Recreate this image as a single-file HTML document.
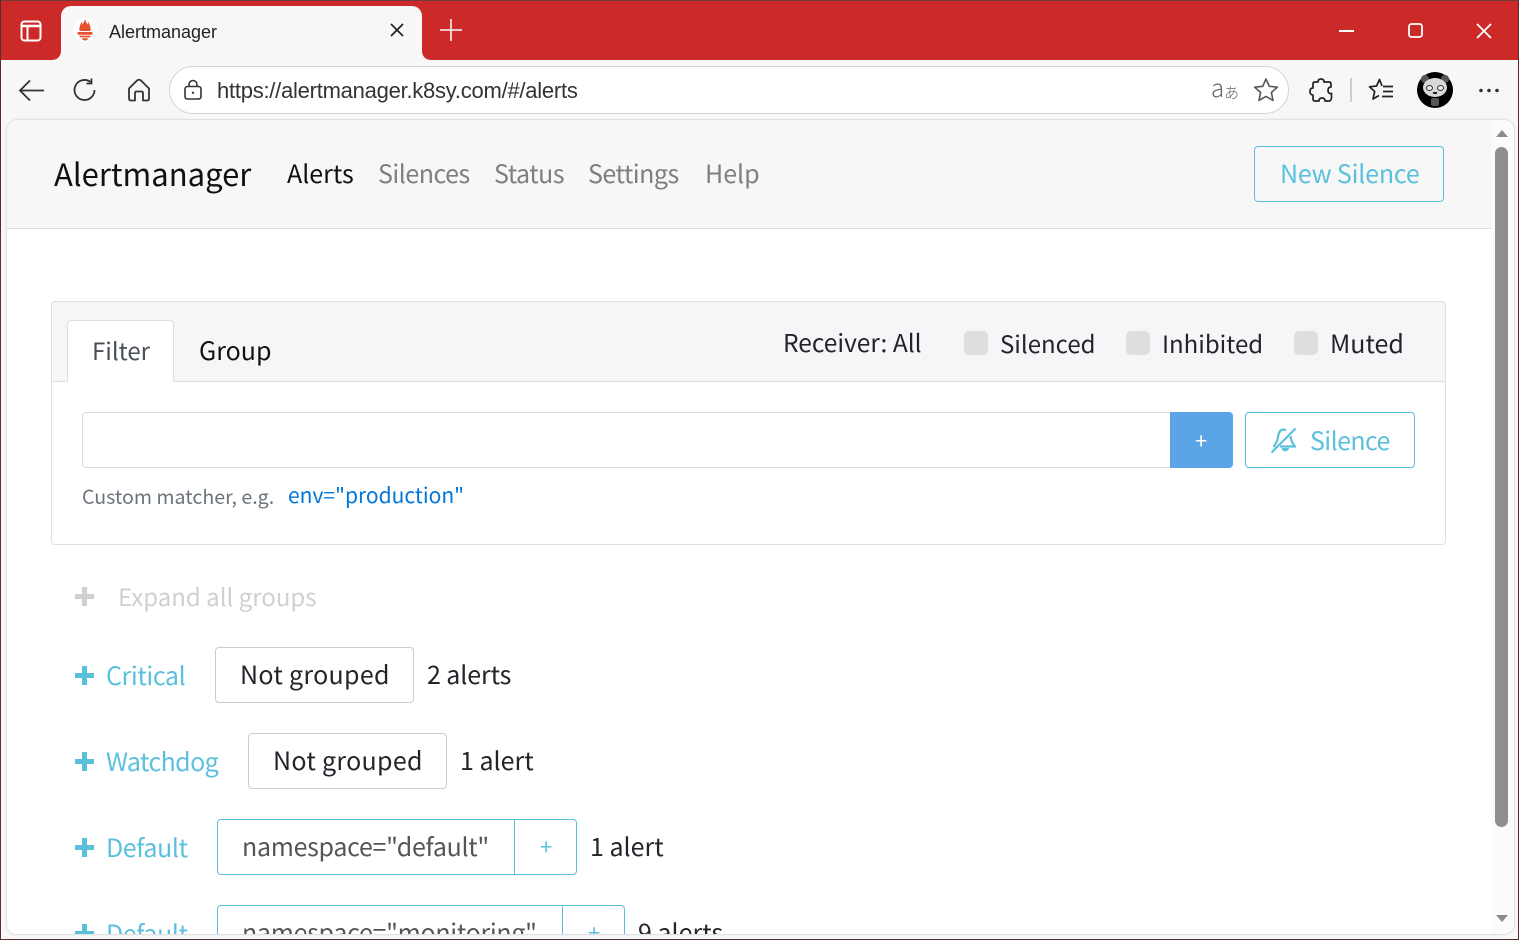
<!DOCTYPE html>
<html lang="en"><head><meta charset="utf-8"><title>Alertmanager</title>
<style>
html,body{margin:0;padding:0;width:1519px;height:940px;overflow:hidden;background:#f7f7f7}
body{position:relative;font-family:"Noto Sans CJK SC","Liberation Sans",sans-serif}
div,span,svg{position:absolute;box-sizing:border-box}
.t{white-space:nowrap;line-height:30px;height:30px;font-size:24px;color:#212529}
.n{color:#7f7f7f;font-size:25px;top:158px;letter-spacing:-.5px}
.c{color:#5bc0de;font-size:25px}
.b{border:1px solid #ccc;border-radius:4px;background:#fff}
.cb{width:24px;height:24px;top:331px;background:#dedede;border-radius:5px}
</style></head><body>
<!-- title bar -->
<div style="left:0;top:0;width:1519px;height:60px;background:#cb2a29;border-top:1px solid #6e3a3a"></div>
<svg style="left:19px;top:19px" width="24" height="24" viewBox="0 0 24 24" fill="none" stroke="#fff" stroke-width="2"><rect x="2.500" y="2.500" width="19" height="19" rx="3"/><path d="M3 7H21" stroke-width="2.500"/><path d="M8.500 7V21"/></svg>
<div style="left:61px;top:6px;width:361px;height:54px;background:#f7f7f7;border-radius:10px 10px 0 0"></div>
<svg style="left:51px;top:50px" width="10" height="10"><path d="M0 10Q10 10 10 0V10Z" fill="#f7f7f7"/></svg>
<svg style="left:422px;top:50px" width="10" height="10"><path d="M10 10Q0 10 0 0V10Z" fill="#f7f7f7"/></svg>
<div style="left:73px;top:18px;width:24px;height:24px;border-radius:50%;background:#fff"></div>
<svg style="left:77px;top:19px" width="16" height="22" viewBox="0 0 16 22" fill="#e6522c"><path d="M8 0C8.500 2.500 9.800 4 10.500 5.500C11 4.500 11 3.500 11 2.500C12.500 5 14 8 13.500 12H2.500C2 8 3.500 5 5 2.500C5 3.500 5 4.500 5.500 5.500C6.200 4 7.500 2.500 8 0Z"/><rect x=".5" y="13" width="15" height="2.800" rx=".8"/><rect x="2.500" y="16.600" width="11" height="1.800" rx=".8"/><path d="M5 19.200H11C11 20.500 9.500 21.500 8 21.500S5 20.500 5 19.200Z"/></svg>
<span class="t" style="left:109px;top:17px;font:18px/30px 'Liberation Sans',sans-serif;color:#222">Alertmanager</span>
<svg style="left:389px;top:22px" width="16" height="16" fill="none" stroke="#222" stroke-width="1.700"><path d="M2 2L14 14M14 2L2 14"/></svg>
<svg style="left:439px;top:18px" width="24" height="24" fill="none" stroke="#f4dcdc" stroke-width="1.800"><path d="M12 1V23M1 12H23"/></svg>
<svg style="left:1339px;top:30px" width="16" height="2"><rect width="15" height="2" fill="#fff"/></svg>
<svg style="left:1407px;top:22px" width="17" height="17" fill="none" stroke="#fff" stroke-width="1.800"><rect x="2" y="2" width="13" height="13" rx="2.500"/></svg>
<svg style="left:1475px;top:22px" width="18" height="18" fill="none" stroke="#fff" stroke-width="1.800"><path d="M2 2L16 16M16 2L2 16"/></svg>
<!-- toolbar -->
<svg style="left:17px;top:77px" width="28" height="28" fill="none" stroke="#333" stroke-width="1.800"><path d="M27 13.500H3M13 3.500L3 13.500L13 23.500"/></svg>
<svg style="left:72px;top:77px" width="26" height="26" viewBox="0 0 26 26" fill="none" stroke="#333" stroke-width="1.800"><path d="M22.500 13A10 10 0 1 1 18.500 5M19.500 1.500V6.500H14.500"/></svg>
<svg style="left:126px;top:77px" width="26" height="26" viewBox="0 0 26 26" fill="none" stroke="#333" stroke-width="1.800" stroke-linejoin="round"><path d="M3 11.500L11 3.500Q13 2 15 3.500L23 11.500V21.500Q23 23.500 21 23.500H17V16Q17 14.500 15.500 14.500H10.500Q9 14.500 9 16V23.500H5Q3 23.500 3 21.500Z"/></svg>
<div style="left:169px;top:66px;width:1120px;height:48px;border-radius:24px;background:#fff;border:1.500px solid #d4d4d4"></div>
<svg style="left:183px;top:79px" width="20" height="22" fill="none" stroke="#333" stroke-width="1.600"><rect x="2" y="7.500" width="16" height="12.500" rx="2.500"/><path d="M6 7.500V5.500A4 4 0 0 1 14 5.500V7.500"/><circle cx="10" cy="13.800" r="1.200" fill="#333" stroke="none"/></svg>
<span class="t" style="left:217px;top:76px;font:22px/30px 'Liberation Sans',sans-serif;color:#333;letter-spacing:-.25px">https://alertmanager.k8sy.com/#/alerts</span>
<span class="t" style="left:1211px;top:72px;font:300 24px/30px 'Noto Sans CJK JP',sans-serif;color:#666">a</span>
<span class="t" style="left:1224px;top:78px;font:300 15px/30px 'Noto Sans CJK JP',sans-serif;color:#666">あ</span>
<svg style="left:1253px;top:77px" width="26" height="26" viewBox="0 0 26 26" fill="none" stroke="#555" stroke-width="1.600" stroke-linejoin="round"><path d="M13 2L16.300 9.300L24.300 10.200L18.400 15.500L20 23.400L13 19.400L6 23.400L7.600 15.500L1.700 10.200L9.700 9.300Z"/></svg>
<svg style="left:1308px;top:77px" width="26" height="26" viewBox="0 0 26 26" fill="none" stroke="#222" stroke-width="1.700" stroke-linejoin="round"><path d="M10 5Q10 2 13 2Q16 2 16 5H21Q23 5 23 7V10Q20 10 20 13.500Q20 17 23.500 16.500V21Q23 24 21 24H17Q17 21 14 21Q11 21 11 24H7Q5 24 5 22V18Q2 18 2 14.500Q2 11 5 11V7Q5 5 7 5Z"/></svg>
<div style="left:1350px;top:78px;width:2px;height:24px;background:#cfcfcf"></div>
<svg style="left:1368px;top:77px" width="27" height="26" viewBox="0 0 27 26" fill="none" stroke="#222" stroke-width="1.700" stroke-linejoin="round"><path d="M14 9L11.500 2.500L8.500 9L1.500 9.800L6.700 14.500L5 22L11 18.500"/><path d="M15 9.500H25M15 14.500H25M14 19.500H25"/></svg>
<div style="left:1417px;top:72px;width:36px;height:36px;border-radius:50%;background:#000"></div>
<div style="left:1421px;top:75px;width:8px;height:8px;border-radius:50%;background:#555"></div>
<div style="left:1441px;top:75px;width:8px;height:8px;border-radius:50%;background:#555"></div>
<div style="left:1423px;top:78px;width:24px;height:19px;border-radius:50%;background:#d8d8d8"></div>
<div style="left:1426px;top:85px;width:7px;height:6px;border-radius:50%;border:1.500px solid #333;background:#eee"></div>
<div style="left:1437px;top:85px;width:7px;height:6px;border-radius:50%;border:1.500px solid #333;background:#eee"></div>
<div style="left:1433px;top:92px;width:4px;height:2px;background:#222"></div>
<div style="left:1431px;top:98px;width:8px;height:8px;background:#555;border-radius:2px"></div>
<svg style="left:1478px;top:88px" width="22" height="5" fill="#333"><circle cx="3" cy="2.500" r="1.800"/><circle cx="11" cy="2.500" r="1.800"/><circle cx="19" cy="2.500" r="1.800"/></svg>
<!-- viewport -->
<div style="left:7px;top:120px;width:1507px;height:814px;background:#fff;border-radius:10px;overflow:hidden;box-shadow:0 0 2px rgba(0,0,0,.25)">
<div style="left:0;top:0;width:1484px;height:109px;background:#f7f7f7;border-bottom:1px solid #dcdcdc"></div>
<div style="left:1484px;top:0;width:23px;height:814px;background:#fbfbfb"></div>
<svg style="left:1488px;top:9px" width="14" height="9"><path d="M1 8H13L7 1Z" fill="#8b8b8b"/></svg>
<div style="left:1488px;top:27px;width:13px;height:680px;border-radius:7px;background:#8f8f8f"></div>
<svg style="left:1488px;top:794px" width="14" height="9"><path d="M1 1H13L7 8Z" fill="#8b8b8b"/></svg>
</div>
<!-- navbar -->
<span class="t" style="left:54px;top:158px;font-size:31px;color:#111">Alertmanager</span>
<span class="t n" style="left:287px;color:#111;letter-spacing:0">Alerts</span>
<span class="t n" style="left:378px">Silences</span>
<span class="t n" style="left:494px">Status</span>
<span class="t n" style="left:588px">Settings</span>
<span class="t n" style="left:705px;letter-spacing:0">Help</span>
<div class="b" style="left:1254px;top:146px;width:190px;height:56px;border-color:#5bc0de;background:transparent"></div>
<span class="t c" style="left:1280px;top:158px;letter-spacing:-.2px">New Silence</span>
<!-- card -->
<div class="b" style="left:51px;top:301px;width:1395px;height:244px;border-color:#dfdfdf"></div>
<div style="left:52px;top:302px;width:1393px;height:80px;background:#f6f6f8;border-bottom:1px solid #dfdfdf;border-radius:4px 4px 0 0"></div>
<div style="left:67px;top:320px;width:107px;height:62px;background:#fff;border:1px solid #dfdfdf;border-bottom:0;border-radius:4px 4px 0 0"></div>
<span class="t" style="left:92px;top:335px;color:#495057">Filter</span>
<span class="t" style="left:199px;top:335px;color:#111;font-size:25px">Group</span>
<span class="t" style="left:783px;top:328px;font-size:24.500px">Receiver: All</span>
<div class="cb" style="left:964px"></div><span class="t" style="left:1000px;top:328px">Silenced</span>
<div class="cb" style="left:1126px"></div><span class="t" style="left:1162px;top:328px">Inhibited</span>
<div class="cb" style="left:1294px"></div><span class="t" style="left:1330px;top:328px;font-size:25px">Muted</span>
<div class="b" style="left:82px;top:412px;width:1090px;height:56px;border-color:#dcdcdc;border-radius:4px 0 0 4px"></div>
<div style="left:1170px;top:412px;width:63px;height:56px;background:#5ba5e6;border-radius:0 4px 4px 0"></div>
<span class="t" style="left:1195px;top:425px;color:#fff;font-size:22px">+</span>
<div class="b" style="left:1245px;top:412px;width:170px;height:56px;border-color:#5bc0de"></div>
<svg style="left:1270px;top:427px" width="28" height="27" viewBox="0 0 28 27" fill="none" stroke="#5bc0de" stroke-width="2.200" stroke-linejoin="round"><path d="M1.500 25.500L25.500 1.500"/><path d="M16 3.500Q12 1 9.500 5Q8 8 7.500 12Q7 15 3.500 20M20.500 9Q21 15 25 19.500H10"/><path d="M12.500 21A2.800 2.800 0 0 0 18 21" fill="#5bc0de"/></svg>
<span class="t c" style="left:1310px;top:425px;letter-spacing:-.6px">Silence</span>
<span class="t" style="left:82px;top:481px;font-size:19.600px;color:#6c757d">Custom matcher, e.g.</span>
<span class="t" style="left:288px;top:480px;font-size:21px;color:#0275d8">env="production"</span>
<!-- groups -->
<svg style="left:75px;top:587px" width="19" height="19" fill="#d0d0d0"><path d="M7 0H12V7H19V12H12V19H7V12H0V7H7Z"/></svg>
<span class="t" style="left:118px;top:581px;font-size:24px;color:#d0d0d0">Expand all groups</span>
<svg style="left:75px;top:666px" width="19" height="19" fill="#5bc0de"><path d="M7 0H12V7H19V12H12V19H7V12H0V7H7Z"/></svg>
<span class="t c" style="left:106px;top:660px;letter-spacing:-.4px">Critical</span>
<div class="b" style="left:215px;top:647px;width:199px;height:56px"></div>
<span class="t" style="left:240px;top:659px;font-size:25px;letter-spacing:.3px">Not grouped</span>
<span class="t" style="left:427px;top:659px;font-size:25px;letter-spacing:-.1px">2 alerts</span>
<svg style="left:75px;top:752px" width="19" height="19" fill="#5bc0de"><path d="M7 0H12V7H19V12H12V19H7V12H0V7H7Z"/></svg>
<span class="t c" style="left:106px;top:746px;letter-spacing:-.6px">Watchdog</span>
<div class="b" style="left:248px;top:733px;width:199px;height:56px"></div>
<span class="t" style="left:273px;top:745px;font-size:25px;letter-spacing:.3px">Not grouped</span>
<span class="t" style="left:460px;top:745px;font-size:25px">1 alert</span>
<svg style="left:75px;top:838px" width="19" height="19" fill="#5bc0de"><path d="M7 0H12V7H19V12H12V19H7V12H0V7H7Z"/></svg>
<span class="t c" style="left:106px;top:832px;letter-spacing:-.4px">Default</span>
<div class="b" style="left:217px;top:819px;width:360px;height:56px;border-color:#5bc0de"></div>
<div style="left:514px;top:819px;width:1px;height:56px;background:#5bc0de"></div>
<span class="t" style="left:242px;top:831px;font-size:25px;color:#555;letter-spacing:-.3px">namespace="default"</span>
<span class="t c" style="left:540px;top:831px;font-size:22px">+</span>
<span class="t" style="left:590px;top:831px;font-size:25px">1 alert</span>
<div style="left:7px;top:900px;width:1484px;height:34px;overflow:hidden;background:#fff;border-radius:0 0 0 10px">
<svg style="left:68px;top:24px" width="19" height="19" fill="#5bc0de"><path d="M7 0H12V7H19V12H12V19H7V12H0V7H7Z"/></svg>
<span class="t c" style="left:99px;top:18px;letter-spacing:-.4px">Default</span>
<div class="b" style="left:210px;top:5px;width:408px;height:56px;border-color:#5bc0de"></div>
<div style="left:555px;top:5px;width:1px;height:56px;background:#5bc0de"></div>
<span class="t" style="left:235px;top:17px;font-size:25px;color:#555;letter-spacing:-.3px">namespace="monitoring"</span>
<span class="t c" style="left:581px;top:17px;font-size:22px">+</span>
<span class="t" style="left:631px;top:17px;font-size:25px">9 alerts</span>
</div>
<!-- window edge -->
<div style="left:0;top:0;width:1519px;height:940px;border:1px solid #5a2b2b;border-top-color:#6e3a3a;pointer-events:none"></div>
</body></html>
